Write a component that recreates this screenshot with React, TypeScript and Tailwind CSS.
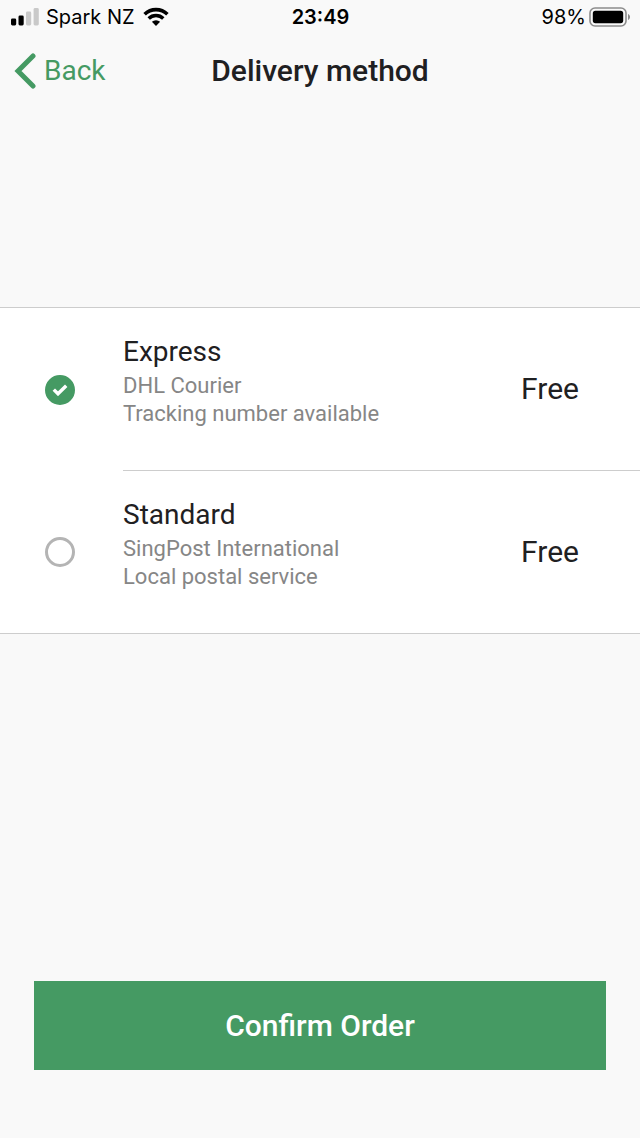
import { useState } from 'react';

type DeliveryOption = {
  id: string;
  name: string;
  carrier: string;
  description: string;
  price: string;
};

const OPTIONS: DeliveryOption[] = [
  {
    id: 'express',
    name: 'Express',
    carrier: 'DHL Courier',
    description: 'Tracking number available',
    price: 'Free',
  },
  {
    id: 'standard',
    name: 'Standard',
    carrier: 'SingPost International',
    description: 'Local postal service',
    price: 'Free',
  },
];

function SignalIcon() {
  return (
    <svg width="30" height="20" viewBox="0 0 30 20" aria-hidden="true">
      <rect x="1" y="11.5" width="5.200" height="7" rx="1.4" fill="#000" />
      <rect x="8.500" y="8.500" width="5.200" height="10" rx="1.4" fill="#000" />
      <rect x="16" y="4.500" width="5.200" height="14" rx="1.4" fill="#c9c9c9" />
      <rect x="23.600" y="1" width="5.200" height="17.5" rx="1.4" fill="#c9c9c9" />
    </svg>
  );
}

function WifiIcon() {
  return (
    <svg width="26" height="20" viewBox="0 0 26 20" fill="none" aria-hidden="true">
      <path d="M1.6 7.2a16.4 16.4 0 0 1 22.8 0" stroke="#000" strokeWidth="3.6" />
      <path d="M5.700 11.5a10.4 10.4 0 0 1 14.600 0" stroke="#000" strokeWidth="3.4" />
      <path d="M13 19l-4.1-4.200a5.9 5.9 0 0 1 8.2 0z" fill="#000" />
    </svg>
  );
}

function BatteryIcon() {
  return (
    <svg width="42" height="20" viewBox="0 0 42 20" fill="none" aria-hidden="true">
      <rect x="1" y="1" width="36" height="18" rx="5" stroke="#8c8c8c" strokeWidth="1.6" />
      <rect x="3.8" y="3.8" width="30.400" height="12.400" rx="2.6" fill="#000" />
      <path d="M39 7v6c1.300-.5 2-1.700 2-3s-.7-2.500-2-3z" fill="#8c8c8c" />
    </svg>
  );
}

function StatusBar() {
  return (
    <div className="grid h-[34px] grid-cols-[1fr_auto_1fr] items-center pr-[9px] pl-[10px] font-[Inter,sans-serif] text-[20px] leading-6 text-black">
      <div className="flex items-center gap-[6px]">
        <SignalIcon />
        <span className="mr-[2px]">Spark NZ</span>
        <WifiIcon />
      </div>
      <span className="font-semibold">23:49</span>
      <div className="flex items-center justify-end gap-[3px]">
        <span>98%</span>
        <BatteryIcon />
      </div>
    </div>
  );
}

function NavBar() {
  return (
    <header className="grid h-[74px] grid-cols-[1fr_auto_1fr] items-center px-[14px]">
      <button type="button" className="flex items-center gap-2 justify-self-start text-[28px] leading-9 text-[#459a63]">
        <svg width="22" height="36" viewBox="0 0 22 36" fill="none" aria-hidden="true">
          <path
            d="M19 3L4 18l15 15"
            stroke="currentColor"
            strokeWidth="5"
            strokeLinecap="round"
            strokeLinejoin="miter"
          />
        </svg>
        Back
      </button>
      <h1 className="text-[30px] leading-9 font-medium">Delivery method</h1>
    </header>
  );
}

type OptionRowProps = {
  option: DeliveryOption;
  checked: boolean;
  onSelect: () => void;
};

function OptionRow({ option, checked, onSelect }: OptionRowProps) {
  return (
    <label className="group flex cursor-pointer items-stretch">
      <span className="grid w-[123px] shrink-0 place-items-center pr-[3px]">
        <input
          type="radio"
          name="delivery"
          value={option.id}
          checked={checked}
          onChange={onSelect}
          className="col-start-1 row-start-1 size-[30px] appearance-none rounded-full border-[3px] border-[#b4b4b4] checked:border-[#459a63] checked:bg-[#459a63]"
        />
        {checked && (
          <svg
            width="16"
            height="12"
            viewBox="0 0 16 12"
            fill="none"
            className="pointer-events-none z-10 col-start-1 row-start-1"
            aria-hidden="true"
          >
            <path d="M1.800 5.600l4.200 4.200L14.200 1.700" stroke="#fff" strokeWidth="3.400" />
          </svg>
        )}
      </span>
      <span className="flex grow items-center justify-between border-b border-[#cdcdcd] pr-[61px] group-last:border-b-0">
        <span className="block pt-[26px] pb-[42px]">
          <span className="mb-[2px] block text-[28px] leading-9">{option.name}</span>
          <span className="block text-[22px] leading-7 text-[#868686]">{option.carrier}</span>
          <span className="block text-[22px] leading-7 text-[#868686]">{option.description}</span>
        </span>
        <span className="text-[30px] leading-9">{option.price}</span>
      </span>
    </label>
  );
}

export default function App() {
  const [selected, setSelected] = useState('express');

  return (
    <div className="flex min-h-screen flex-col bg-[#f9f9f9] font-[Roboto,sans-serif] text-[#1f2022]">
      <StatusBar />
      <NavBar />
      <main className="flex grow flex-col pt-[199px]">
        <fieldset aria-label="Delivery method" className="border-y border-[#cdcdcd] bg-white">
          {OPTIONS.map((option) => (
            <OptionRow
              key={option.id}
              option={option}
              checked={selected === option.id}
              onSelect={() => setSelected(option.id)}
            />
          ))}
        </fieldset>
        <div className="mt-auto px-[34px] pt-8 pb-[68px]">
          <button type="button" className="h-[89px] w-full bg-[#459a63] text-[30px] leading-9 font-medium text-white">
            Confirm Order
          </button>
        </div>
      </main>
    </div>
  );
}
